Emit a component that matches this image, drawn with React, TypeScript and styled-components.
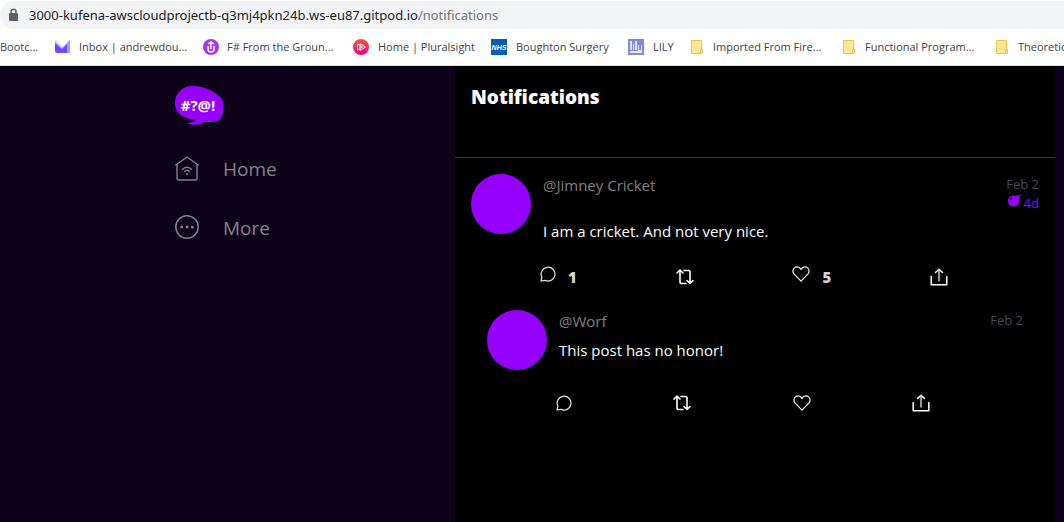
import React from 'react';
import styled, { createGlobalStyle } from 'styled-components';

const PURPLE = '#9500ff';
const NIGHT = '#0c021a';

const GlobalStyle = createGlobalStyle`
  *, *::before, *::after { box-sizing: border-box; }
  body {
    margin: 0;
    background: ${NIGHT};
    font-family: "Open Sans", "Noto Sans", sans-serif;
    overflow-x: hidden;
  }
  a { color: inherit; text-decoration: none; }
  svg { display: block; flex: none; }
`;

const Page = styled.div`
  min-height: 100vh;
  display: flex;
  flex-direction: column;
`;

const BrowserBar = styled.header`
  background: #fff;
  border-bottom: 1px solid #dadce0;
  padding-top: 1px;
  overflow: hidden;
`;

const AddressBar = styled.div`
  display: flex;
  align-items: center;
  gap: 10px;
  height: 28px;
  padding-left: 8px;
  background: #f1f3f4;
  border-radius: 14px 0 0 14px;
`;

const Address = styled.span`
  font-family: "Noto Sans", sans-serif;
  font-size: 13px;
  line-height: 20px;
  color: #202124;
  white-space: nowrap;
`;

const AddressPath = styled.span`
  color: #72767b;
`;

const Bookmarks = styled.nav`
  display: grid;
  grid-template-columns: 54px 148px 151px 138px 137px 62px 152px 153px 120px;
  align-items: center;
  height: 36px;
`;

const Bookmark = styled.a`
  display: flex;
  align-items: center;
  gap: 8px;
  font-size: 11px;
  line-height: 16px;
  color: #3c4043;
  white-space: nowrap;
`;

const Shell = styled.div`
  flex: 1;
  display: grid;
  grid-template-columns: minmax(0, 1fr) minmax(0, 600px) 9px;
`;

const Sidebar = styled.aside`
  display: flex;
  justify-content: flex-end;
`;

const SidebarInner = styled.div`
  width: 280px;
  padding-top: 19px;
`;

const NavList = styled.nav`
  display: flex;
  flex-direction: column;
  gap: 31px;
  margin-top: 29px;
`;

const NavLink = styled.a`
  display: flex;
  align-items: center;
  gap: 24px;
  font-size: 19px;
  line-height: 28px;
  color: #85808c;
`;

const Main = styled.main`
  background: #000;
`;

const Heading = styled.div`
  height: 92px;
  padding: 16px;
  border-bottom: 1px solid #3c3a48;
`;

const Title = styled.h1`
  margin: 0;
  font-size: 19px;
  line-height: 30px;
  font-weight: 800;
  color: #fff;
`;

const Feed = styled.section`
  padding: 16px;
`;

const Post = styled.article<{ $reply?: boolean }>`
  padding: ${(p) => (p.$reply ? '0 16px' : '0')};
  margin-top: ${(p) => (p.$reply ? '21px' : '0')};
`;

const PostTop = styled.div`
  display: flex;
  gap: 12px;
`;

const Avatar = styled.div`
  flex: none;
  width: 60px;
  height: 60px;
  border-radius: 50%;
  background: ${PURPLE};
`;

const PostBody = styled.div`
  flex: 1;
  min-width: 0;
`;

const Meta = styled.div`
  display: flex;
  justify-content: space-between;
`;

const Handle = styled.a`
  font-size: 15px;
  line-height: 22px;
  color: #808080;
`;

const Times = styled.div`
  display: flex;
  flex-direction: column;
  align-items: flex-end;
  font-size: 13px;
  line-height: 20px;
  color: #434c5e;
`;

const Expires = styled.span`
  display: flex;
  gap: 2px;
  line-height: 18px;
  color: ${PURPLE};
`;

const Message = styled.p<{ $spaced?: boolean }>`
  margin: ${(p) => (p.$spaced ? '7px' : '6px')} 0 0;
  font-size: 15px;
  line-height: 24px;
  color: #fff;
`;

const Actions = styled.div<{ $reply?: boolean }>`
  display: flex;
  align-items: center;
  justify-content: space-between;
  height: 24px;
  margin: ${(p) => (p.$reply ? '21px 93px 0 69px' : '22px 91px 0 69px')};
`;

const ActionButton = styled.button`
  display: flex;
  align-items: flex-start;
  gap: 12px;
  padding: 0;
  border: 0;
  background: none;
  font: 800 15px/24px "Open Sans", sans-serif;
  color: #d4d2d6;
  cursor: pointer;
`;

const LockIcon = () => (
  <svg width="11" height="14" viewBox="0 0 11 14">
    <path d="M3 6V3.7a2.5 2.5 0 0 1 5 0V6" fill="none" stroke="#5f6368" strokeWidth="1.5" />
    <rect x="1" y="5" width="9" height="8" rx="1" fill="#5f6368" />
  </svg>
);

const MailIcon = () => (
  <svg width="17" height="16" viewBox="0 0 17 16">
    <path d="M1 1l7 7 8-7v12H1z" fill="#c9bcff" />
    <path d="M1 4l7 6 5-5v9H3a2 2 0 0 1-2-2z" fill="#6d4aff" />
    <path d="M13 4l3-3v13h-3z" fill="#a995ff" />
  </svg>
);

const UdemyIcon = () => (
  <svg width="17" height="16" viewBox="0 0 17 16">
    <circle cx="9" cy="8" r="8" fill="#a435f0" />
    <path d="M6 7v3a3 3 0 0 0 6 0V7M6 5l3-2 3 2M9 4v6" fill="none" stroke="#fff" strokeWidth="1.5" />
  </svg>
);

const PluralsightIcon = () => (
  <svg width="17" height="16" viewBox="0 0 17 16">
    <defs>
      <linearGradient id="ps" x1="0" y1="0" x2="0" y2="1">
        <stop offset="0" stopColor="#f15b2a" />
        <stop offset="1" stopColor="#ec008c" />
      </linearGradient>
    </defs>
    <circle cx="8" cy="8" r="8" fill="url(#ps)" />
    <path d="M4.500 5l5 3-5 3zM7 4.500l5.500 3.500L7 11.500z" fill="none" stroke="#fff" strokeWidth="1" />
  </svg>
);

const NhsIcon = () => (
  <svg width="17" height="16" viewBox="0 0 17 16">
    <rect width="16" height="16" fill="#005eb8" />
    <text x="8" y="10.500" textAnchor="middle" fontFamily="Liberation Sans, sans-serif" fontSize="7" fontWeight="700" fontStyle="italic" fill="#fff">NHS</text>
  </svg>
);

const LilyIcon = () => (
  <svg width="17" height="16" viewBox="0 0 17 16">
    <rect width="16" height="16" fill="#8089dc" />
    <path d="M2 2h2v9H2zM5 5h1v6H5zM7 2h2v9H7zM10 6h1v5h2V6h1v7h-4z" fill="#dfe3fb" />
    <path d="M2 12h12v2H2z" fill="#eceefe" />
  </svg>
);

const FolderIcon = () => (
  <svg width="15" height="16" viewBox="0 0 15 16">
    <path d="M1.500 1.500h10v9h1v4h-11z" fill="#ffe794" stroke="#e6c34a" />
    <path d="M10.500 14v-3.500h2" fill="none" stroke="#e6c34a" />
  </svg>
);

const Logo = () => (
  <svg width="49" height="41" viewBox="0 0 49 41" role="img" aria-label="Home">
    <path
      d="M16 1C27 0 40 6 46 13c3 4 3 14 0 20-2 4-8 4-16 4-5 3-12 4-19 1 4 0 8-1 10-3C9 34 1 29 0 20-1 10 6 2 16 1z"
      fill={PURPLE}
    />
    <text x="23" y="26" textAnchor="middle" fontFamily="Open Sans, sans-serif" fontSize="15" fontWeight="700" fill="#fff">#?@!</text>
  </svg>
);

const HomeIcon = () => (
  <svg width="24" height="26" viewBox="0 0 24 26" fill="none" stroke="currentColor" strokeWidth="1.400" strokeLinecap="round" strokeLinejoin="round">
    <path d="M.800 9L12 1l11.200 8M2 8.500V22.500A1.500 1.500 0 0 0 3.500 24h17a1.500 1.500 0 0 0 1.500-1.500V8.500" />
    <path d="M7.500 13.500c2.500-3 6.500-3 9 0M9.500 15.500c1.500-1.500 3.500-1.500 5 0" />
    <circle cx="12" cy="18" r="1" fill="currentColor" stroke="none" />
  </svg>
);

const MoreIcon = () => (
  <svg width="24" height="26" viewBox="0 0 24 26">
    <circle cx="12" cy="12" r="11.200" fill="none" stroke="currentColor" strokeWidth="1.500" />
    <circle cx="6.600" cy="12" r="1.500" fill="currentColor" />
    <circle cx="12" cy="12" r="1.500" fill="currentColor" />
    <circle cx="17.400" cy="12" r="1.500" fill="currentColor" />
  </svg>
);

const BombIcon = () => (
  <svg width="15" height="14" viewBox="0 0 15 14" fill={PURPLE}>
    <circle cx="6.500" cy="7" r="5.600" />
    <path d="M8 2l2-1 1 .800L14.500.500v1L12 2.800l.500 2-1 1z" />
    <path d="M3 6a3.500 3.500 0 0 1 2-2.500" fill="none" stroke="#000" strokeWidth=".8" />
  </svg>
);

const CommentIcon = () => (
  <svg width="16" height="18" viewBox="0 0 16 18" fill="none" stroke="#e8e6ea" strokeWidth="1.200" strokeLinejoin="round">
    <path d="M1 16l.900-3.800A6.900 6.900 0 1 1 5 15.300z" />
  </svg>
);

const RepostIcon = () => (
  <svg width="18" height="18" viewBox="0 0 18 18" fill="none" stroke="#fff" strokeWidth="1.600" strokeLinecap="round" strokeLinejoin="round">
    <path d="M1 5l3-3 3 3M4 2.500V14a1.500 1.500 0 0 0 1.500 1.500H10M8 2.500h4.500A1.500 1.500 0 0 1 14 4v11.500M11 12.500l3 3 3-3" />
  </svg>
);

const HeartIcon = () => (
  <svg width="18" height="18" viewBox="0 0 19 18" fill="none" stroke="#f3f1f5" strokeWidth="1.300" strokeLinejoin="round">
    <path d="M9.500 16.500L2.300 9.200A4.400 4.400 0 0 1 1 6C1 3.300 3 1.500 5.400 1.500c1.700 0 3.200.900 4.100 2.600.900-1.700 2.400-2.600 4.100-2.600C16 1.500 18 3.300 18 6c0 1.200-.500 2.300-1.300 3.200z" />
  </svg>
);

const ShareIcon = () => (
  <svg width="18" height="18" viewBox="0 0 18 18" fill="none" stroke="#fff" strokeWidth="1.500" strokeLinecap="round" strokeLinejoin="round">
    <path d="M1.200 8.500v8.300h15.600V8.500M5.500 4.500L9 1.200l3.500 3.300" />
    <path d="M9 1.500V13" stroke="#c9c7cc" />
  </svg>
);

const bookmarks = [
  { icon: null, label: 'Bootc...' },
  { icon: <MailIcon />, label: 'Inbox | andrewdou...' },
  { icon: <UdemyIcon />, label: 'F# From the Groun...' },
  { icon: <PluralsightIcon />, label: 'Home | Pluralsight' },
  { icon: <NhsIcon />, label: 'Boughton Surgery' },
  { icon: <LilyIcon />, label: 'LILY' },
  { icon: <FolderIcon />, label: 'Imported From Fire...' },
  { icon: <FolderIcon />, label: 'Functional Program...' },
  { icon: <FolderIcon />, label: 'Theoretical' },
];

interface ActivityProps {
  handle: string;
  message: string;
  date: string;
  expires?: string;
  replies?: number;
  likes?: number;
  reply?: boolean;
}

const Activity = ({ handle, message, date, expires, replies, likes, reply }: ActivityProps) => (
  <Post $reply={reply}>
    <PostTop>
      <Avatar />
      <PostBody>
        <Meta>
          <Handle href="#profile">@{handle}</Handle>
          <Times>
            <span>{date}</span>
            {expires && (
              <Expires>
                <BombIcon />
                {expires}
              </Expires>
            )}
          </Times>
        </Meta>
        <Message $spaced={!!expires}>{message}</Message>
      </PostBody>
    </PostTop>
    <Actions $reply={reply}>
      <ActionButton aria-label="Reply"><CommentIcon />{replies}</ActionButton>
      <ActionButton aria-label="Repost"><RepostIcon /></ActionButton>
      <ActionButton aria-label="Like"><HeartIcon />{likes}</ActionButton>
      <ActionButton aria-label="Share"><ShareIcon /></ActionButton>
    </Actions>
  </Post>
);

export default function App() {
  return (
    <Page>
      <GlobalStyle />
      <BrowserBar>
        <AddressBar>
          <LockIcon />
          <Address>
            3000-kufena-awscloudprojectb-q3mj4pkn24b.ws-eu87.gitpod.io<AddressPath>/notifications</AddressPath>
          </Address>
        </AddressBar>
        <Bookmarks aria-label="Bookmarks">
          {bookmarks.map((b) => (
            <Bookmark key={b.label} href="#bookmark">{b.icon}{b.label}</Bookmark>
          ))}
        </Bookmarks>
      </BrowserBar>
      <Shell>
        <Sidebar>
          <SidebarInner>
            <Logo />
            <NavList aria-label="Main">
              <NavLink href="#home"><HomeIcon />Home</NavLink>
              <NavLink href="#more"><MoreIcon />More</NavLink>
            </NavList>
          </SidebarInner>
        </Sidebar>
        <Main>
          <Heading><Title>Notifications</Title></Heading>
          <Feed>
            <Activity handle="Jimney Cricket" message="I am a cricket. And not very nice." date="Feb 2" expires="4d" replies={1} likes={5} />
            <Activity reply handle="Worf" message="This post has no honor!" date="Feb 2" />
          </Feed>
        </Main>
      </Shell>
    </Page>
  );
}
